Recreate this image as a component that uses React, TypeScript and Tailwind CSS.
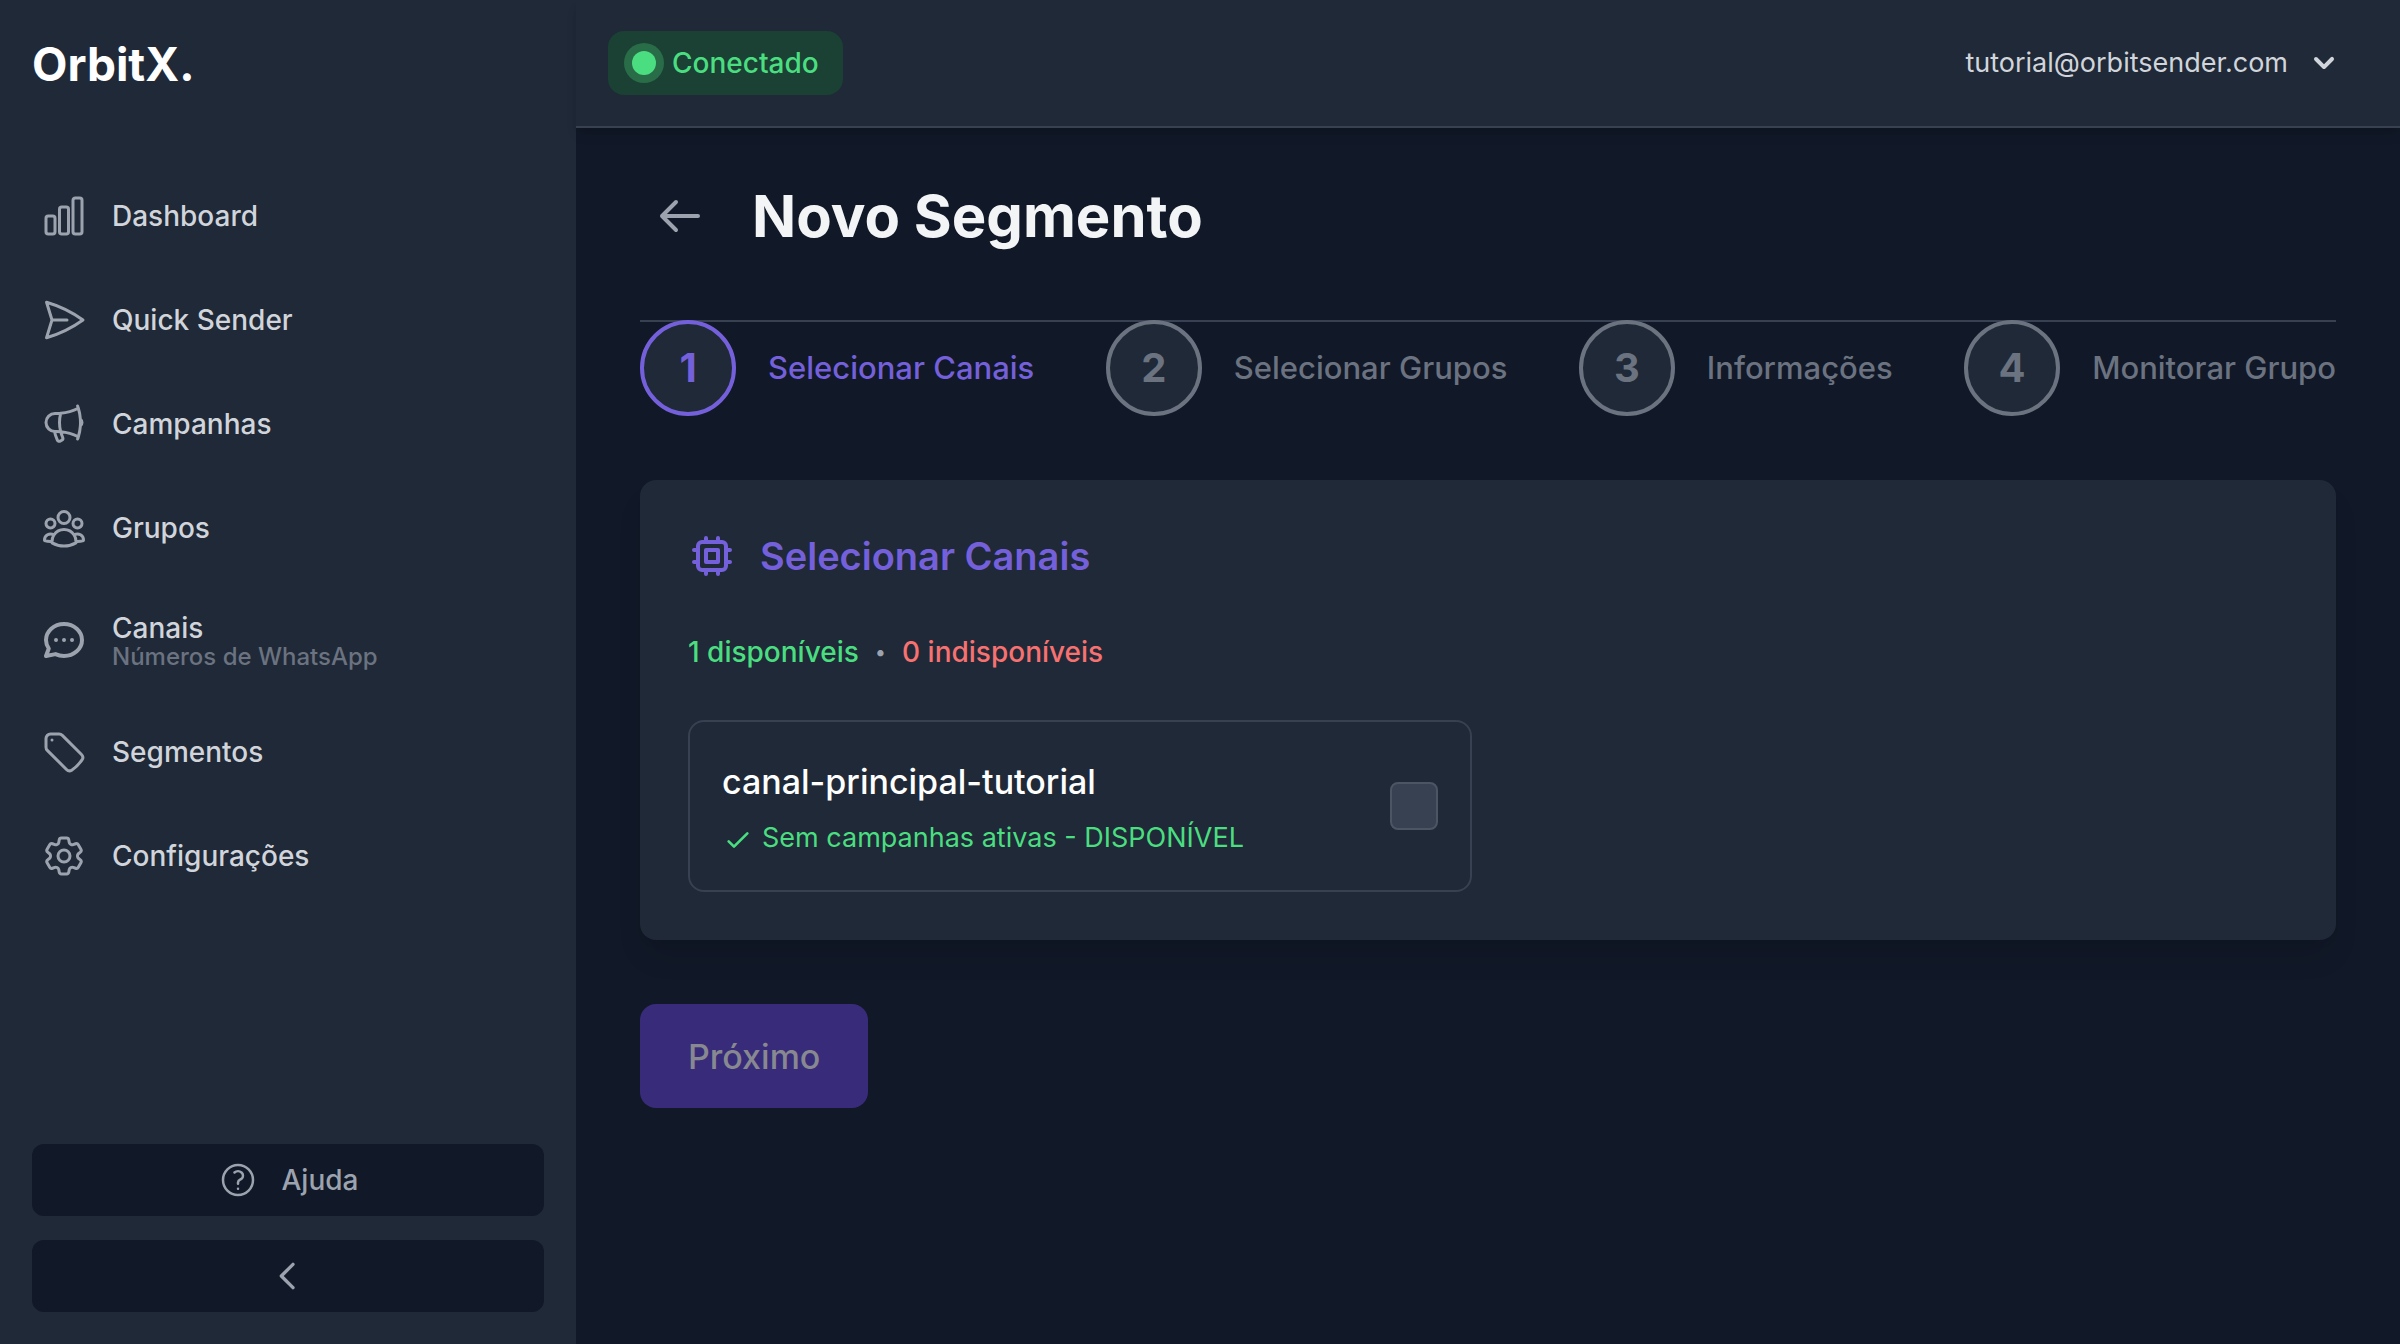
import React from "react";
import {
  HiOutlineChartBar,
  HiOutlinePaperAirplane,
  HiOutlineMegaphone,
  HiOutlineUserGroup,
  HiOutlineTag,
  HiOutlineCog6Tooth,
  HiOutlineQuestionMarkCircle,
} from "react-icons/hi2";
import {
  HiOutlineChevronLeft,
  HiOutlineArrowLeft,
  HiOutlineChat,
  HiOutlineCheck,
  HiOutlineChip,
  HiChevronDown,
} from "react-icons/hi";
import type { IconType } from "react-icons";

type NavItem = { label: string; icon: IconType; note?: string };

const navItems: NavItem[] = [
  { label: "Dashboard", icon: HiOutlineChartBar },
  { label: "Quick Sender", icon: HiOutlinePaperAirplane },
  { label: "Campanhas", icon: HiOutlineMegaphone },
  { label: "Grupos", icon: HiOutlineUserGroup },
  { label: "Canais", icon: HiOutlineChat, note: "Números de WhatsApp" },
  { label: "Segmentos", icon: HiOutlineTag },
  { label: "Configurações", icon: HiOutlineCog6Tooth },
];

const steps = ["Selecionar Canais", "Selecionar Grupos", "Informações", "Monitorar Grupo"];

function Sidebar() {
  return (
    <aside className="flex w-[576px] shrink-0 flex-col bg-[#1f2937]">
      <div className="flex h-32 items-center px-8 text-[46px] font-bold text-white">OrbitX.</div>
      <nav className="mt-10 flex flex-1 flex-col gap-2 px-4">
        {navItems.map(({ label, icon: Icon, note }) => (
          <a
            key={label}
            href="#"
            className="flex items-center gap-6 rounded-xl p-6 text-[28px] font-medium text-[#d1d5db]"
          >
            <Icon className="size-12 shrink-0 text-[#9ca3af]" />
            {note ? (
              <span className="flex h-16 flex-col justify-end">
                <span className="leading-7">{label}</span>
                <span className="text-2xl leading-[30px] text-[#6b7280]">{note}</span>
              </span>
            ) : (
              <span className="leading-10">{label}</span>
            )}
          </a>
        ))}
      </nav>
      <div className="flex flex-col gap-6 p-8 text-[28px] font-medium text-[#9ca3af]">
        <button className="flex h-[72px] items-center justify-center gap-6 rounded-xl bg-[#111827]">
          <HiOutlineQuestionMarkCircle className="size-10" />
          Ajuda
        </button>
        <button
          aria-label="Recolher menu"
          className="flex h-[72px] items-center justify-center rounded-xl bg-[#111827]"
        >
          <HiOutlineChevronLeft className="size-10" />
        </button>
      </div>
    </aside>
  );
}

function Header() {
  return (
    <header className="flex h-32 items-center justify-between border-b-2 border-[#374151] bg-[#1f2937] pr-14 pl-8 shadow-[0_8px_12px_-2px_rgba(0,0,0,0.1),0_4px_8px_-4px_rgba(0,0,0,0.1)]">
      <div className="flex h-16 items-center gap-2 rounded-2xl bg-[#1b4034] pr-6 pl-4 text-[28px] font-medium text-[#4ade80]">
        <span className="flex size-10 items-center justify-center rounded-full bg-[#296c48]">
          <span className="size-6 rounded-full bg-[#4ade80]" />
        </span>
        Conectado
      </div>
      <button className="flex items-center gap-4 text-[27px] text-[#d1d5db]">
        tutorial@orbitsender.com
        <HiChevronDown className="size-10" />
      </button>
    </header>
  );
}

function Stepper() {
  return (
    <ol className="mt-16 flex justify-between bg-[linear-gradient(#374151,#374151)] bg-[length:100%_2px] bg-no-repeat">
      {steps.map((step, i) => (
        <li
          key={step}
          className={
            i === 0
              ? "flex items-center gap-8 text-[#7560db]"
              : "flex items-center gap-8 text-[#6b7280]"
          }
        >
          <span className="flex size-24 items-center justify-center rounded-full border-4 border-current bg-[#1f2937] text-[40px] font-bold">
            {i + 1}
          </span>
          <span className="text-[31px] font-medium">{step}</span>
        </li>
      ))}
    </ol>
  );
}

function ChannelCard() {
  return (
    <section className="mt-16 rounded-2xl bg-[#1f2937] p-12 shadow-[0_20px_30px_-6px_rgba(0,0,0,0.1),0_8px_12px_-8px_rgba(0,0,0,0.1)]">
      <h2 className="flex items-center gap-6 text-[38px] leading-14 font-semibold text-[#7560db]">
        <HiOutlineChip className="size-12" />
        Selecionar Canais
      </h2>
      <p className="mt-12 flex gap-4 text-[28px] leading-10 font-medium">
        <span className="text-[#4ade80]">1 disponíveis</span>
        <span className="text-xl leading-10 font-normal text-[#9ca3af]">•</span>
        <span className="text-[#f87171]">0 indisponíveis</span>
      </p>
      <div className="mt-12 grid grid-cols-2 gap-8">
        <label className="flex items-center justify-between rounded-2xl border-2 border-[#374151] p-8">
          <span className="flex flex-col gap-2">
            <span className="text-[34px] leading-14 font-medium text-white">canal-principal-tutorial</span>
            <span className="text-[27px] leading-10 text-[#4ade80]">
              <HiOutlineCheck className="mr-2 inline-block size-8 align-middle" />
              Sem campanhas ativas - DISPONÍVEL
            </span>
          </span>
          <input
            type="checkbox"
            className="size-12 appearance-none rounded-lg border-2 border-[#4b5563] bg-[#374151]"
          />
        </label>
      </div>
    </section>
  );
}

export default function App() {
  return (
    <div className="flex min-h-screen bg-[#111827] font-['Inter',sans-serif]">
      <Sidebar />
      <div className="min-w-0 flex-1">
        <Header />
        <main className="px-16 pt-12">
          <div className="flex items-center gap-8">
            <button aria-label="Voltar" className="p-4 text-[#9ca3af]">
              <HiOutlineArrowLeft className="size-12" />
            </button>
            <h1 className="text-[58px] leading-18 font-bold text-[#f3f4f6]">Novo Segmento</h1>
          </div>
          <Stepper />
          <ChannelCard />
          <button
            disabled
            className="mt-16 h-[104px] rounded-2xl bg-[#382c7a] px-12 text-[34px] font-medium text-[#888990]"
          >
            Próximo
          </button>
        </main>
      </div>
    </div>
  );
}
